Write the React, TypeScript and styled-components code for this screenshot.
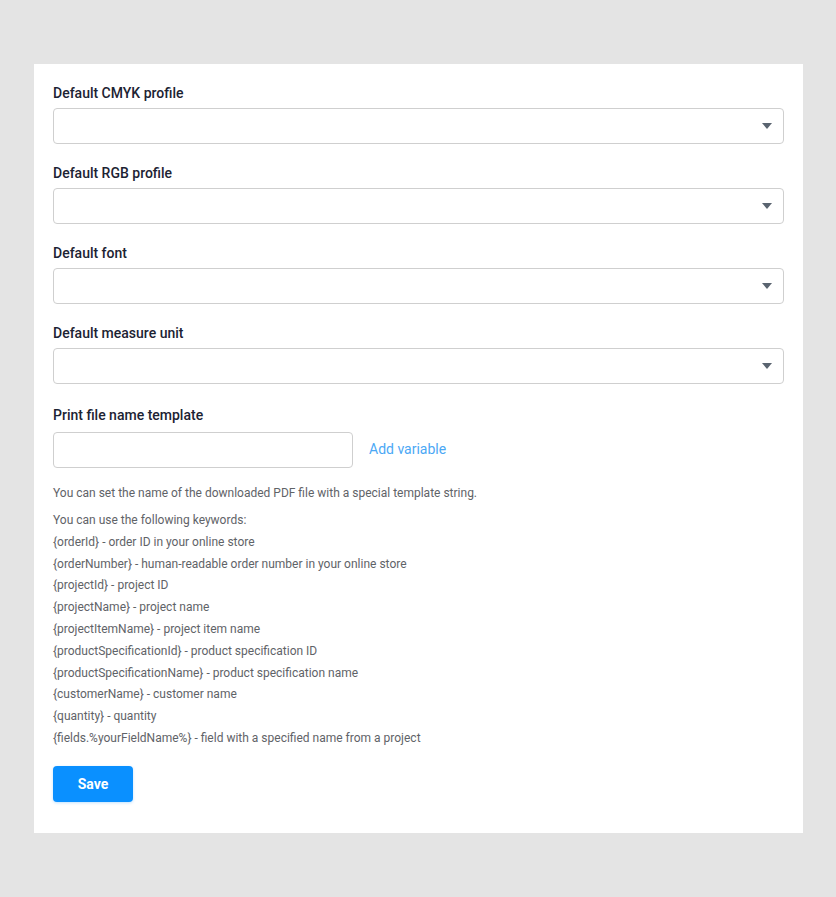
import React from "react";
import styled, { createGlobalStyle } from "styled-components";

const GlobalStyle = createGlobalStyle`
  html, body {
    margin: 0;
    padding: 0;
    background: #e4e4e4;
  }
  body {
    font-family: Roboto, "Noto Sans", "Liberation Sans", sans-serif;
  }
  * { box-sizing: border-box; }
`;

const Page = styled.div`
  padding: 64px 33px 65px 34px;
  min-height: 897px;
`;

const Card = styled.form`
  background: #ffffff;
  padding: 19px 19px 31px 19px;
  display: flex;
  flex-direction: column;
`;

const Field = styled.div<{ $gap?: number; $top?: number; $bottom?: number }>`
  display: flex;
  flex-direction: column;
  gap: ${(p) => p.$gap ?? 5}px;
  margin-top: ${(p) => p.$top ?? 0}px;
  margin-bottom: ${(p) => p.$bottom ?? 19}px;
`;

const Label = styled.label`
  font-size: 14px;
  line-height: 20px;
  font-weight: 500;
  color: #1c2333;
`;

const SelectBox = styled.div`
  position: relative;
  height: 36px;
  border: 1px solid #cfcfcf;
  border-radius: 4px;
  background: #fff;
`;

const Caret = styled.span`
  position: absolute;
  right: 11px;
  top: 50%;
  margin-top: -3px;
  width: 0;
  height: 0;
  border-left: 5px solid transparent;
  border-right: 5px solid transparent;
  border-top: 6px solid #5a6470;
`;

const TemplateRow = styled.div`
  display: flex;
  align-items: center;
  gap: 16px;
`;

const TextInput = styled.input`
  width: 300px;
  height: 36px;
  border: 1px solid #cfcfcf;
  border-radius: 4px;
  background: #fff;
  padding: 0 10px;
  font: inherit;
  font-size: 14px;
  outline: none;
`;

const LinkButton = styled.button`
  border: none;
  background: none;
  padding: 0 0 2px;
  font-family: inherit;
  font-size: 14px;
  line-height: 20px;
  color: #4ba8f5;
  cursor: pointer;
`;

const Help = styled.div`
  margin-top: 14px;
  font-size: 12px;
  color: #5f6368;
`;

const HelpIntro = styled.p`
  margin: 0 0 6px;
  line-height: 22px;
`;

const KeywordList = styled.ul`
  list-style: none;
  margin: 0;
  padding: 0;
  line-height: 21.8px;
`;

const SaveButton = styled.button`
  margin-top: 16px;
  align-self: flex-start;
  width: 80px;
  height: 36px;
  border: none;
  border-radius: 4px;
  background: #0a90ff;
  color: #fff;
  font-family: inherit;
  font-size: 14px;
  font-weight: 700;
  box-shadow: 0 1px 3px rgba(10, 144, 255, 0.25);
  cursor: pointer;
`;

const selects = [
  "Default CMYK profile",
  "Default RGB profile",
  "Default font",
  "Default measure unit",
];

const keywords = [
  "You can use the following keywords:",
  "{orderId} - order ID in your online store",
  "{orderNumber} - human-readable order number in your online store",
  "{projectId} - project ID",
  "{projectName} - project name",
  "{projectItemName} - project item name",
  "{productSpecificationId} - product specification ID",
  "{productSpecificationName} - product specification name",
  "{customerName} - customer name",
  "{quantity} - quantity",
  "{fields.%yourFieldName%} - field with a specified name from a project",
];

export default function App() {
  return (
    <>
      <GlobalStyle />
      <Page>
        <Card onSubmit={(e) => e.preventDefault()}>
          {selects.map((label) => (
            <Field key={label}>
              <Label>{label}</Label>
              <SelectBox>
                <Caret />
              </SelectBox>
            </Field>
          ))}
          <Field $gap={7} $top={2} $bottom={0}>
            <Label>Print file name template</Label>
            <TemplateRow>
              <TextInput type="text" />
              <LinkButton type="button">Add variable</LinkButton>
            </TemplateRow>
          </Field>
          <Help>
            <HelpIntro>
              You can set the name of the downloaded PDF file with a special
              template string.
            </HelpIntro>
            <KeywordList>
              {keywords.map((k) => (
                <li key={k}>{k}</li>
              ))}
            </KeywordList>
          </Help>
          <SaveButton type="submit">Save</SaveButton>
        </Card>
      </Page>
    </>
  );
}
